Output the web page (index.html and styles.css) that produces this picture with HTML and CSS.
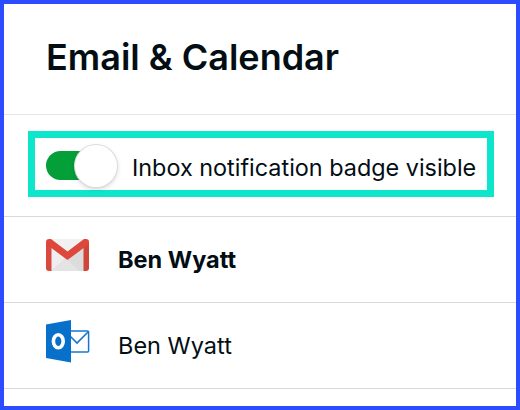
FILE: index.html
```
<!DOCTYPE html>
<html lang="en">
<head>
    <meta charset="UTF-8">
    <meta name="viewport" content="width=device-width, initial-scale=1.0">
    <title>Email &amp; Calendar</title>
    <link rel="stylesheet" href="styles.css">
</head>
<body>

    <div class="panel">
        <h1 class="title">Email &amp; Calendar</h1>

        <!-- Badge setting -->
        <div class="setting">
            <label class="highlight">
                <span class="toggle"><span class="knob"></span></span>
                <span class="setting-text">Inbox notification badge visible</span>
            </label>
        </div>

        <!-- Connected accounts -->
        <div class="account">
            <svg class="icon" width="44" height="44" viewBox="0 1 44 44">
                <path d="M3 6h38v32H3z" fill="#eeeeee"/>
                <path d="M5 38l14-13 3 2 16-14v25z" fill="#e4e4e4"/>
                <path d="M22 27l16-14v25H33z" fill="#dcdcdc"/>
                <path d="M4 6h36L22 20z" fill="#f1f1f1"/>
                <path d="M0 9l5.500 5v24H3q-3 0-3-3z" fill="#d9493d"/>
                <path d="M43 9l-5.500 5v24H40q3 0 3-3z" fill="#cf453a"/>
                <path d="M0 9q0-3 3-3h2l16.500 12.500L38 6h2q3 0 3 3 0 2-2 3.500L21.500 27 2 12.500Q0 11 0 9z" fill="#de473b"/>
            </svg>
            <span class="name active">Ben Wyatt</span>
        </div>
        <div class="account">
            <svg class="icon" width="44" height="44" viewBox="0 0 44 44">
                <rect x="23" y="11" width="19.600" height="21" rx="1" fill="#fff" stroke="#1976cf" stroke-width="1.500"/>
                <path d="M24 16l7 7L42 12" fill="none" stroke="#1976cf" stroke-width="1.600"/>
                <path d="M0 4.500L25 0v42.500L0 38z" fill="#0670cb"/>
                <ellipse cx="12.300" cy="21.300" rx="4.900" ry="6.500" fill="none" stroke="#fff" stroke-width="3.600"/>
            </svg>
            <span class="name">Ben Wyatt</span>
        </div>
    </div>

</body>
</html>
```
FILE: styles.css
```
* {
    box-sizing: border-box;
}
body {
    margin: 0;
    font-family: Inter, "Liberation Sans", sans-serif;
    color: #030d14;
    background: white;
}
.panel {
    height: 410px;
    border: 4px solid #2b4dff;
}
.title {
    height: 111px;
    margin: 0;
    padding: 31px 42px 0;
    font-size: 36px;
    font-weight: 600;
    line-height: 44px;
    border-bottom: 1px solid #e5e5e5;
}
.setting {
    height: 102px;
    padding: 16px 22px 0 24px;
    border-bottom: 1px solid #d9d9d9;
}
.highlight {
    display: flex;
    align-items: center;
    width: 466px;
    height: 66px;
    padding-left: 11px;
    border: 7px solid #0ee6cb;
}
.toggle {
    display: flex;
    align-items: center;
    justify-content: flex-end;
    width: 71px;
    height: 29px;
    margin-top: 3px;
    border-radius: 15px;
    background: linear-gradient(to right, #049f38 55px, transparent 55px);
}
.knob {
    flex: none;
    width: 42px;
    height: 42px;
    border-radius: 50%;
    background: white;
    box-shadow: 0 0 0 1px #dddddd, 0 2px 5px rgba(0, 0, 0, 0.2);
}
.setting-text {
    margin: 7px 0 0 15px;
    font-size: 23.400px;
    line-height: 30px;
    white-space: nowrap;
}
.account {
    display: flex;
    height: 86px;
    padding: 17px 42px 0;
    border-bottom: 1px solid #d9d9d9;
}
.icon {
    flex: none;
}
.name {
    margin: 11px 0 0 28px;
    font-size: 23.500px;
    line-height: 30px;
}
.active {
    font-weight: 700;
}
```
